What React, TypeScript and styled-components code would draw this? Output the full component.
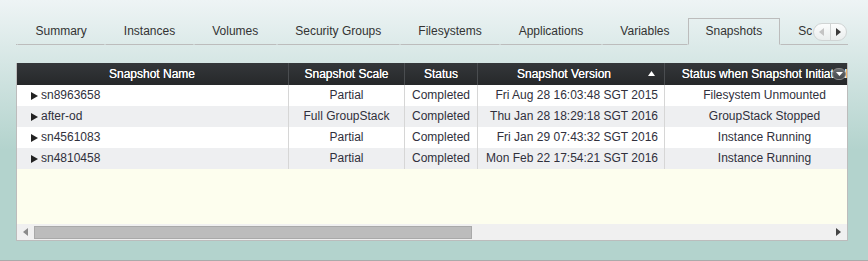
import React from 'react';
import styled, { createGlobalStyle } from 'styled-components';

const GlobalStyle = createGlobalStyle`
  html, body {
    margin: 0;
    padding: 0;
  }
  body {
    font-family: "Liberation Sans", Arial, sans-serif;
    font-size: 12px;
    color: #333;
  }
`;

const Page = styled.div`
  height: 261px;
  box-sizing: border-box;
  padding: 18px 20px 0 16px;
  background: linear-gradient(#eef4f5 0px, #b3d3cd 150px, #b3d3cd 100%);
  border-bottom: 1px solid #aaa;
  overflow: hidden;
`;

const TabStrip = styled.div`
  position: relative;
  height: 27px;
`;

const TabList = styled.div`
  display: flex;
  height: 27px;
  width: 796px;
  overflow: hidden;
`;

const Spacer = styled.div<{ $grow?: boolean }>`
  flex: ${(p) => (p.$grow ? '1 0 auto' : '0 0 1px')};
  border-bottom: 1px solid #bcbcbc;
`;

const Tab = styled.div<{ $active?: boolean }>`
  flex: 0 0 auto;
  box-sizing: border-box;
  height: 27px;
  line-height: 25px;
  padding: 0 ${(p) => (p.$active ? '16.5px' : '17.5px')};
  color: #333;
  white-space: nowrap;
  border: 1px solid ${(p) => (p.$active ? '#bcbcbc' : 'transparent')};
  border-bottom: 1px solid ${(p) => (p.$active ? 'transparent' : '#bcbcbc')};
`;

const TabLine = styled.div`
  position: absolute;
  left: 796px;
  right: 0;
  bottom: 0;
  border-bottom: 1px solid #bcbcbc;
`;

const Scroller = styled.div`
  position: absolute;
  left: 797px;
  top: 5px;
  width: 34px;
  height: 18px;
  box-sizing: border-box;
  display: flex;
  border: 1px solid #d0d4d4;
  border-radius: 9px;
  background: linear-gradient(rgba(255, 255, 255, 0.85), rgba(236, 238, 238, 0.85));
  overflow: hidden;
`;

const ScrollHalf = styled.div<{ $right?: boolean }>`
  flex: 1;
  display: flex;
  align-items: center;
  justify-content: center;
  border-left: ${(p) => (p.$right ? '1px solid #d0d4d4' : 'none')};
`;

const Grid = styled.div`
  position: relative;
  margin-top: 18px;
  width: 832px;
  height: 178px;
  box-sizing: border-box;
  display: flex;
  flex-direction: column;
  border: 1px solid #bcbcbc;
  border-top: none;
  background: #fdfeee;
  overflow: hidden;
`;

const cols = '273px 116px 73px 187px 200px';

const HeaderRow = styled.div`
  display: grid;
  grid-template-columns: ${cols};
  height: 22px;
  margin-left: -1px;
  background: linear-gradient(#34373a, #26282a);
`;

const HeaderCell = styled.div<{ $padRight?: number }>`
  position: relative;
  box-sizing: border-box;
  line-height: 22px;
  text-align: center;
  color: #fff;
  white-space: nowrap;
  overflow: hidden;
  padding-right: ${(p) => p.$padRight ?? 0}px;
  border-right: 1px solid #4a4d50;
  text-shadow: 0 0 0.4px #fff;
`;

const SortIcon = styled.svg`
  position: absolute;
  right: 9px;
  top: 8px;
`;

const MenuButton = styled.div`
  position: absolute;
  right: 1px;
  top: 5px;
  width: 14px;
  height: 12px;
  box-sizing: border-box;
  border-radius: 6px;
  border: 1px solid #888;
  background: linear-gradient(#6a6d70, #45484b);
  display: flex;
  align-items: center;
  justify-content: center;
`;

const Row = styled.div<{ $alt?: boolean }>`
  display: grid;
  grid-template-columns: ${cols};
  height: 21px;
  margin-left: -1px;
  background: ${(p) => (p.$alt ? '#eeeff1' : '#fff')};
`;

const Cell = styled.div<{ $align?: 'left' | 'center' | 'right' }>`
  box-sizing: border-box;
  line-height: 21px;
  white-space: nowrap;
  overflow: hidden;
  color: #30303c;
  text-align: ${(p) => p.$align ?? 'center'};
  padding: ${(p) => (p.$align === 'left' ? '0 0 0 15px' : p.$align === 'right' ? '0 6px 0 0' : '0')};
  border-right: 1px solid #d6d6d6;
`;

const Expander = styled.span`
  display: inline-block;
  width: 0;
  height: 0;
  margin-right: 3px;
  border-top: 4px solid transparent;
  border-bottom: 4px solid transparent;
  border-left: 7px solid #222;
  vertical-align: -1px;
`;

const Filler = styled.div`
  flex: 1;
  background: #fdfeee;
`;

const HScroll = styled.div`
  height: 16px;
  display: flex;
  align-items: center;
  background: #f0f0f0;
`;

const ArrowBox = styled.div`
  width: 17px;
  height: 16px;
  display: flex;
  align-items: center;
  justify-content: center;
`;

const Track = styled.div`
  flex: 1;
  height: 16px;
  display: flex;
  align-items: center;
`;

const Thumb = styled.div`
  width: 438px;
  height: 13px;
  box-sizing: border-box;
  border: 1px solid #a9a9a9;
  background: #bcbcbc;
`;

const Tri = ({ dir, color }: { dir: 'left' | 'right'; color: string }) => (
  <svg width="5" height="8" viewBox="0 0 5 8">
    <path d={dir === 'left' ? 'M5 0 L0 4 L5 8 Z' : 'M0 0 L5 4 L0 8 Z'} fill={color} />
  </svg>
);

const tabs = [
  'Summary',
  'Instances',
  'Volumes',
  'Security Groups',
  'Filesystems',
  'Applications',
  'Variables',
  'Snapshots',
  'Schedules',
];

const snapshots = [
  { name: 'sn8963658', scale: 'Partial', status: 'Completed', version: 'Fri Aug 28 16:03:48 SGT 2015', state: 'Filesystem Unmounted' },
  { name: 'after-od', scale: 'Full GroupStack', status: 'Completed', version: 'Thu Jan 28 18:29:18 SGT 2016', state: 'GroupStack Stopped' },
  { name: 'sn4561083', scale: 'Partial', status: 'Completed', version: 'Fri Jan 29 07:43:32 SGT 2016', state: 'Instance Running' },
  { name: 'sn4810458', scale: 'Partial', status: 'Completed', version: 'Mon Feb 22 17:54:21 SGT 2016', state: 'Instance Running' },
];

const App: React.FC = () => {
  return (
    <>
      <GlobalStyle />
      <Page>
        <TabStrip>
          <TabList>
            <Spacer />
            {tabs.map((t) => (
              <Tab key={t} $active={t === 'Snapshots'}>
                {t}
              </Tab>
            ))}
            <Spacer $grow />
          </TabList>
          <TabLine />
          <Scroller>
            <ScrollHalf>
              <Tri dir="left" color="#c4c4c4" />
            </ScrollHalf>
            <ScrollHalf $right>
              <Tri dir="right" color="#3a3a3a" />
            </ScrollHalf>
          </Scroller>
        </TabStrip>

        <Grid>
          <HeaderRow>
            <HeaderCell>Snapshot Name</HeaderCell>
            <HeaderCell>Snapshot Scale</HeaderCell>
            <HeaderCell>Status</HeaderCell>
            <HeaderCell $padRight={14}>
              Snapshot Version
              <SortIcon width="7" height="5" viewBox="0 0 7 5">
                <path d="M3.5 0 L7 5 L0 5 Z" fill="#fff" />
              </SortIcon>
            </HeaderCell>
            <HeaderCell>Status when Snapshot Initiated</HeaderCell>
          </HeaderRow>
          <MenuButton>
            <svg width="7" height="4" viewBox="0 0 7 4">
              <path d="M0 0 L7 0 L3.5 4 Z" fill="#fff" />
            </svg>
          </MenuButton>
          {snapshots.map((s, i) => (
            <Row key={s.name} $alt={i % 2 === 1}>
              <Cell $align="left">
                <Expander />
                {s.name}
              </Cell>
              <Cell>{s.scale}</Cell>
              <Cell>{s.status}</Cell>
              <Cell $align="right">{s.version}</Cell>
              <Cell>{s.state}</Cell>
            </Row>
          ))}
          <Filler />
          <HScroll>
            <ArrowBox>
              <Tri dir="left" color="#8a8a8a" />
            </ArrowBox>
            <Track>
              <Thumb />
            </Track>
            <ArrowBox>
              <Tri dir="right" color="#444" />
            </ArrowBox>
          </HScroll>
        </Grid>
      </Page>
    </>
  );
};

export default App;
